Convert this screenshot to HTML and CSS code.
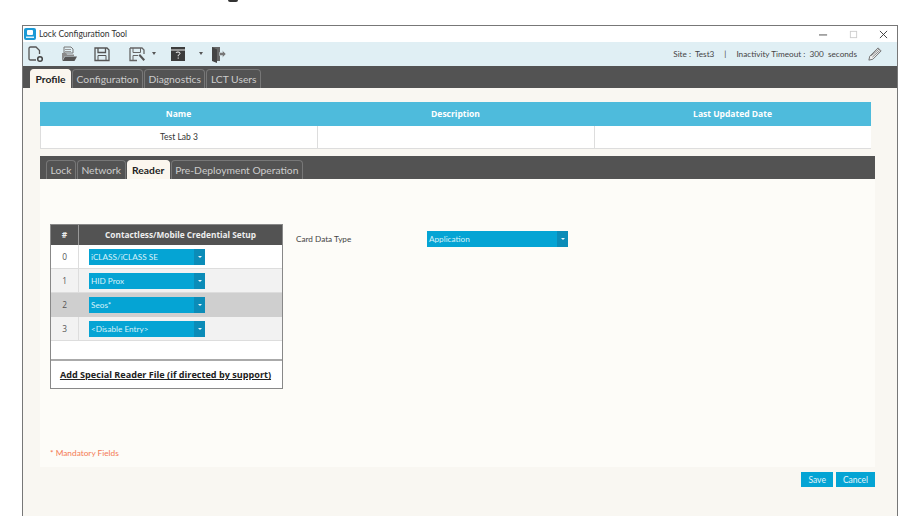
FILE: index.html
```html
<!DOCTYPE html>
<html lang="en">
<head>
  <meta charset="UTF-8" />
  <meta name="viewport" content="width=device-width, initial-scale=1.0"/>
  <title>Lock Configuration Tool</title>
  <link rel="stylesheet" href="styles.css">
</head>
<body>
  <div class="page-top"><span class="page-top-mark"></span></div>

  <div class="window">
    <div class="titlebar">
      <svg class="app-icon" viewBox="0 0 12 12">
        <rect width="12" height="12" rx="2" fill="#1b9ad6"/>
        <rect x="3" y="2" width="6" height="5" rx="1" fill="#fff"/>
        <rect x="2" y="8.5" width="8" height="1.5" fill="#dff1fa"/>
      </svg>
      <span class="title-text">Lock Configuration Tool</span>
      <div class="window-buttons">
        <svg viewBox="0 0 10 10" class="win-btn"><path d="M0 5.5H9" stroke="#444" fill="none"/></svg>
        <svg viewBox="0 0 10 10" class="win-btn"><rect x="1.5" y="1.5" width="7" height="7" stroke="#ccc" fill="none"/></svg>
        <svg viewBox="0 0 10 10" class="win-btn"><path d="M1 1L9 9M9 1L1 9" stroke="#333" fill="none"/></svg>
      </div>
    </div>

    <div class="toolbar">
      <div class="tool-icons">
        <svg class="tool new" viewBox="0 0 18 18"><path d="M9 15H3.5Q2 15 2 13.500V3.500Q2 2 3.500 2H9L12.500 5.500V9" fill="none" stroke="#555" stroke-width="1.300"/><circle cx="13" cy="14" r="2.300" fill="none" stroke="#444" stroke-width="1.500"/></svg>
        <svg class="tool open" viewBox="0 0 18 18"><path d="M4 2H11L13 4V8H4Z" fill="none" stroke="#777"/><path d="M5 4.500H11M5 6.500H11" stroke="#999"/><path d="M2 8H6L7 9.500H14V11H5L2 16Z" fill="#8a8a8a"/><path d="M5 11.500H17L14.500 16H2.500Z" fill="#555"/></svg>
        <svg class="tool save" viewBox="0 0 18 18"><path d="M2 3H14L16 5V15.500H2Z" fill="none" stroke="#555" stroke-width="1.300"/><path d="M5 3V7.500H12.500V3" fill="none" stroke="#555" stroke-width="1.300"/><path d="M5 15.500V10.500H13V15.500" fill="none" stroke="#555"/></svg>
        <svg class="tool save-as" viewBox="0 0 18 18"><path d="M2 3H14L16 5V9M9 15.500H2V3" fill="none" stroke="#666" stroke-width="1.300"/><path d="M5 3V7.500H12.500V3M5 15.500V10.500H10" fill="none" stroke="#666"/><path d="M10.500 10.500L12 9L17 14.500L15.500 16Z" fill="#555"/></svg>
        <span class="caret caret-save"></span>
        <svg class="tool help" viewBox="0 0 18 18"><rect x="2" y="2" width="14" height="14" fill="#3c3c3c"/><rect x="2" y="4.500" width="14" height="1" fill="#eee"/><path d="M7 8Q7 7 9 7Q11 7 11 8.300Q11 9.300 9.200 10.300V11.300M9.200 12.500V13.700" fill="none" stroke="#fff" stroke-width="1"/></svg>
        <span class="caret caret-help"></span>
        <svg class="tool logout" viewBox="0 0 18 18"><path d="M3 2H11V16H3Z" fill="#666"/><path d="M3 2L8 4.500V18L3 16Z" fill="#444"/><path d="M10.500 7.500H13.500V5.500L17 9L13.500 12.500V10.500H10.500Z" fill="#777" stroke="#dfeef3" stroke-width=".5"/></svg>
      </div>
      <div class="site-info">
        <span>Site :&nbsp; Test3</span>
        <span class="site-sep">|</span>
        <span>Inactivity Timeout :&nbsp; 300&nbsp; seconds</span>
        <svg class="pencil" viewBox="0 0 16 16"><path d="M11.500 1L15 4.500L5.500 14L1 15L2 10.500Z" fill="#eee" stroke="#666"/><path d="M3.500 10L12.500 2.500M5 11.500L13.500 4" stroke="#777" fill="none"/></svg>
      </div>
    </div>

    <div class="tab-bar outer-tabs">
      <span class="tab active">Profile</span>
      <span class="tab">Configuration</span>
      <span class="tab">Diagnostics</span>
      <span class="tab">LCT Users</span>
    </div>

    <div class="content">
      <div class="profile-table">
        <div class="profile-head">
          <span>Name</span>
          <span>Description</span>
          <span>Last Updated Date</span>
        </div>
        <div class="profile-row">
          <span>Test Lab 3</span>
          <span></span>
          <span></span>
        </div>
      </div>

      <div class="tab-bar inner-tabs">
        <span class="tab">Lock</span>
        <span class="tab">Network</span>
        <span class="tab active">Reader</span>
        <span class="tab">Pre-Deployment Operation</span>
      </div>

      <div class="panel">
        <div class="panel-main">
          <div class="setup-table">
            <div class="setup-head">
              <span class="col-num">#</span>
              <span class="col-name">Contactless/Mobile Credential Setup</span>
            </div>
            <div class="setup-row">
              <span class="col-num">0</span>
              <div class="col-name"><div class="dropdown"><span>iCLASS/iCLASS SE</span><i class="dropdown-arrow"></i></div></div>
            </div>
            <div class="setup-row alt">
              <span class="col-num">1</span>
              <div class="col-name"><div class="dropdown"><span>HID Prox</span><i class="dropdown-arrow"></i></div></div>
            </div>
            <div class="setup-row selected">
              <span class="col-num">2</span>
              <div class="col-name"><div class="dropdown"><span>Seos*</span><i class="dropdown-arrow"></i></div></div>
            </div>
            <div class="setup-row alt">
              <span class="col-num">3</span>
              <div class="col-name"><div class="dropdown"><span>&lt;Disable Entry&gt;</span><i class="dropdown-arrow"></i></div></div>
            </div>
            <div class="setup-spacer"></div>
            <div class="setup-link"><a href="#">Add Special Reader File (if directed by support)</a></div>
          </div>

          <div class="card-type">
            <label>Card Data Type</label>
            <div class="dropdown wide"><span>Application</span><i class="dropdown-arrow"></i></div>
          </div>
        </div>
        <div class="mandatory">* Mandatory Fields</div>
      </div>

      <div class="actions">
        <button class="btn">Save</button>
        <button class="btn">Cancel</button>
      </div>
    </div>
  </div>
</body>
</html>
```

FILE: styles.css
```css
body {
  margin: 0;
  background: #fff;
  font-family: Lato, "Open Sans", sans-serif;
  color: #333;
  overflow: hidden;
}

.page-top {
  height: 25px;
  padding-left: 228px;
}

.page-top-mark {
  display: block;
  width: 10px;
  height: 2px;
  background: #333;
  border-radius: 0 0 5px 5px;
}

.window {
  width: 876px;
  height: 491px;
  margin-left: 22px;
  border: 1px solid #777;
  border-bottom: none;
  box-sizing: border-box;
  background: #f9f7f2;
  display: flex;
  flex-direction: column;
}

.titlebar {
  height: 16px;
  display: flex;
  align-items: center;
  padding-left: 1px;
  background: #fff;
  flex-shrink: 0;
}

.app-icon {
  width: 12px;
  height: 12px;
  margin-right: 3px;
}

.title-text {
  font-size: 8.500px;
  color: #333;
}

.window-buttons {
  margin-left: auto;
  display: flex;
  gap: 21px;
  padding-right: 9px;
}

.win-btn {
  width: 9px;
  height: 9px;
}

.toolbar {
  height: 24px;
  background: #e0eff4;
  display: flex;
  align-items: center;
  flex-shrink: 0;
}

.tool-icons {
  display: flex;
  align-items: center;
  padding-left: 4px;
  margin-top: -1px;
}

.tool {
  width: 18px;
  height: 18px;
  flex-shrink: 0;
}

.open { margin-left: 15px; }
.save { margin-left: 15px; }
.save-as { margin-left: 17px; }
.help { margin-left: 13px; }
.logout { margin-left: 6px; }

.caret {
  width: 0;
  height: 0;
  margin-left: 6px;
  border-left: 2.500px solid transparent;
  border-right: 2.500px solid transparent;
  border-top: 3px solid #555;
}

.caret-help { margin-left: 12px; }

.site-info {
  margin-left: auto;
  display: flex;
  align-items: center;
  font-size: 8.200px;
  color: #444;
  padding-right: 15px;
}

.site-sep {
  margin: 0 10px;
}

.pencil {
  width: 14px;
  height: 14px;
  margin-left: 11px;
}

.tab-bar {
  background: #535353;
  display: flex;
  align-items: flex-end;
  flex-shrink: 0;
}

.outer-tabs {
  height: 22px;
  padding-left: 7px;
  gap: 1px;
}

.inner-tabs {
  height: 23px;
  margin-top: 7px;
  padding-left: 6px;
  gap: 1px;
}

.tab {
  border: 1px solid #777;
  border-bottom: none;
  border-radius: 4px 4px 0 0;
  color: #ccc;
  font-size: 10.300px;
  line-height: 18px;
  padding: 0 3.500px;
  box-sizing: border-box;
}

.tab.active {
  background: #fbf6ee;
  border-color: #fbf6ee;
  color: #222;
  font-weight: 700;
  padding: 0 4.500px;
}

.content {
  flex: 1;
  padding: 14px 22px 0 17px;
  display: flex;
  flex-direction: column;
}

.profile-table {
  margin-right: 4px;
}

.profile-head,
.profile-row {
  display: grid;
  grid-template-columns: 277px 277px 277px;
  text-align: center;
}

.profile-head {
  background: #4ebbdc;
  color: #fff;
  font-family: "Open Sans", sans-serif;
  font-size: 8.500px;
  font-weight: 700;
  line-height: 24px;
}

.profile-row {
  background: #fff;
  font-size: 8.500px;
  line-height: 22px;
  color: #333;
  border-bottom: 1px solid #ddd;
}

.profile-row span {
  border-left: 1px solid #ddd;
}

.panel {
  background: #fdfcf8;
  height: 288px;
  flex-shrink: 0;
  display: flex;
  flex-direction: column;
}

.panel-main {
  flex: 1;
  display: flex;
  align-items: flex-start;
  padding: 45px 0 0 10px;
}

.setup-table {
  width: 233px;
  height: 165px;
  box-sizing: border-box;
  border: 1px solid #888;
  background: #fff;
  font-family: "Open Sans", sans-serif;
  font-size: 8.300px;
  display: flex;
  flex-direction: column;
}

.setup-head {
  display: flex;
  height: 20px;
  background: #535353;
  color: #eee;
  font-weight: 700;
  line-height: 20px;
  text-align: center;
}

.col-num {
  width: 28px;
  flex-shrink: 0;
  text-align: center;
  border-right: 1px solid #999;
  box-sizing: border-box;
}

.col-name {
  flex: 1;
}

.setup-row {
  height: 24px;
  display: flex;
  align-items: stretch;
  border-bottom: 1px solid #ddd;
  box-sizing: border-box;
  color: #555;
}

.setup-row .col-num {
  line-height: 23px;
  border-right-color: #ddd;
}

.setup-row .col-name {
  display: flex;
  align-items: center;
  padding-left: 10px;
}

.setup-row.alt {
  background: #f2f2f2;
}

.setup-row.selected {
  background: #cfcfcf;
  border-bottom-color: #cfcfcf;
}

.setup-row.selected .col-num {
  border-right-color: #cfcfcf;
}

.setup-spacer {
  height: 18px;
  border-bottom: 2px solid #aaa;
}

.setup-link {
  flex: 1;
  display: flex;
  align-items: center;
  justify-content: center;
  padding-right: 2px;
}

.setup-link a {
  color: #222;
  font-size: 9.100px;
  font-weight: 700;
}

.dropdown {
  width: 116px;
  height: 16px;
  background: #05a4d4;
  color: #d8f2fa;
  font-family: Lato, sans-serif;
  font-size: 8.200px;
  line-height: 16px;
  padding-left: 2px;
  box-sizing: border-box;
  display: flex;
  justify-content: space-between;
}

.dropdown.wide {
  width: 141px;
}

.dropdown-arrow {
  width: 11px;
  background: #0b8cb8;
  position: relative;
}

.dropdown-arrow::after {
  content: "";
  position: absolute;
  top: 7px;
  left: 4px;
  border-left: 2px solid transparent;
  border-right: 2px solid transparent;
  border-top: 2px solid #e8f6fb;
}

.card-type {
  display: flex;
  align-items: center;
  margin: 7px 0 0 13px;
}

.card-type label {
  width: 131px;
  font-size: 8.200px;
  color: #444;
}

.mandatory {
  color: #f47a55;
  font-size: 8.300px;
  padding: 0 0 9px 10px;
}

.actions {
  display: flex;
  justify-content: flex-end;
  gap: 3px;
  margin-top: 5px;
}

.btn {
  height: 15px;
  border: none;
  background: #05a4d4;
  color: #e4f5fb;
  font-family: inherit;
  font-size: 8.500px;
  padding: 0 7px;
}
```
